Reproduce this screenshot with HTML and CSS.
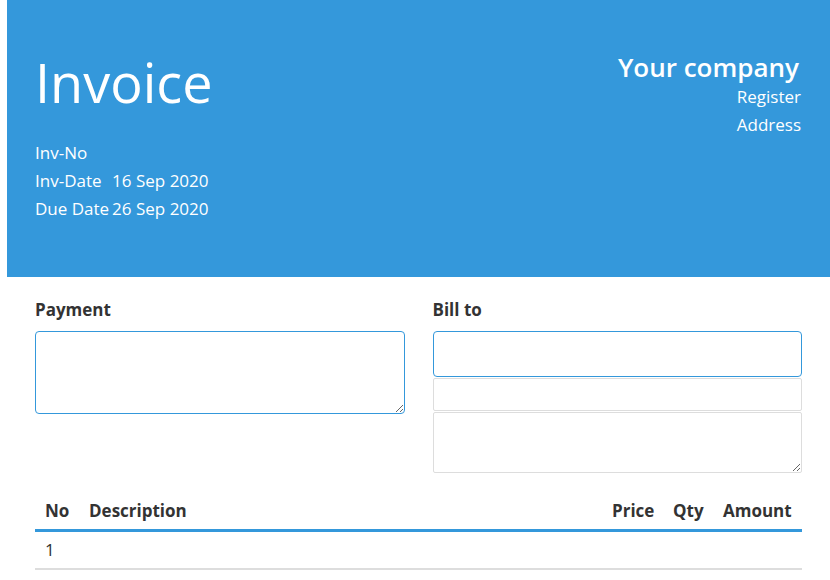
FILE: index.html
```
<!DOCTYPE html>
<html>
<head>
<meta charset="utf-8">
<link rel="stylesheet" href="styles.css">
</head>
<body>
<div class="page">
  <header class="top">
    <div class="top-left">
      <h1 class="title">Invoice</h1>
      <table class="meta">
        <tr><td class="meta-label">Inv-No</td><td></td></tr>
        <tr><td class="meta-label">Inv-Date</td><td>16 Sep 2020</td></tr>
        <tr><td class="meta-label">Due Date</td><td>26 Sep 2020</td></tr>
      </table>
    </div>
    <div class="top-right">
      <div class="company">Your company</div>
      <div class="company-line">Register</div>
      <div class="company-line">Address</div>
    </div>
  </header>
  <section class="content">
    <div class="cols">
      <div class="col">
        <div class="label">Payment</div>
        <textarea class="field field-payment"></textarea>
      </div>
      <div class="col">
        <div class="label">Bill to</div>
        <div class="stack">
          <input class="field field-name" type="text">
          <input class="field field-line" type="text">
          <textarea class="field field-addr"></textarea>
        </div>
      </div>
    </div>
    <table class="items">
      <colgroup>
        <col class="c-no"><col><col class="c-price"><col class="c-qty"><col class="c-amount">
      </colgroup>
      <thead>
        <tr><th>No</th><th>Description</th><th>Price</th><th>Qty</th><th>Amount</th></tr>
      </thead>
      <tbody>
        <tr><td>1</td><td></td><td></td><td></td><td></td></tr>
      </tbody>
    </table>
  </section>
</div>
</body>
</html>
```
FILE: styles.css
```
html, body {
  margin: 0;
  padding: 0;
  background: #fff;
}
body {
  font-family: "Open Sans", "Noto Sans", sans-serif;
  color: #333;
}
.page {
  margin-left: 7px;
  width: 823px;
}
.top {
  background: #3498db;
  color: #fff;
  display: flex;
  justify-content: space-between;
  padding: 51px 29px 54px 28px;
}
.title {
  margin: 0;
  font-size: 54px;
  line-height: 62px;
  font-weight: 500;
}
.meta {
  border-collapse: collapse;
  margin-top: 26px;
  font-size: 17px;
  line-height: 28px;
}
.meta td {
  padding: 0;
}
.meta-label {
  padding-right: 3px !important;
  white-space: nowrap;
}
.top-right {
  text-align: right;
}
.company {
  font-size: 26px;
  line-height: 32px;
  font-weight: 600;
  margin-right: 2px;
}
.company-line {
  font-size: 17px;
  line-height: 28px;
}
.content {
  padding: 21px 28px 0 28px;
}
.cols {
  display: flex;
  gap: 28px;
}
.col {
  flex: 1;
  display: flex;
  flex-direction: column;
}
.label {
  font-size: 17px;
  line-height: 24px;
  font-weight: 700;
  margin-bottom: 9px;
}
.stack {
  display: flex;
  flex-direction: column;
  gap: 1px;
}
.field {
  display: block;
  box-sizing: border-box;
  width: 100%;
  margin: 0;
  border: 1px solid #ddd;
  border-radius: 4px;
  background: #fff;
  font-family: inherit;
  font-size: 16px;
  padding: 6px 8px;
  outline: none;
}
.field-payment {
  height: 83px;
  border-color: #3498db;
}
.field-name {
  height: 46px;
  border-color: #3498db;
}
.field-line {
  height: 33px;
  border-radius: 2px;
}
.field-addr {
  height: 61px;
  border-radius: 2px;
}
.items {
  width: 100%;
  margin-top: 20px;
  border-collapse: collapse;
  table-layout: fixed;
  font-size: 17px;
  line-height: 24px;
}
.c-no { width: 44px; }
.c-price { width: 61px; }
.c-qty { width: 50px; }
.c-amount { width: 89px; }
.items th, .items td {
  padding: 6px 10px;
  text-align: left;
  white-space: nowrap;
}
.items th {
  font-weight: 700;
  border-bottom: 3px solid #3498db;
}
.items td {
  border-bottom: 2px solid #ddd;
  height: 24px;
}
```
